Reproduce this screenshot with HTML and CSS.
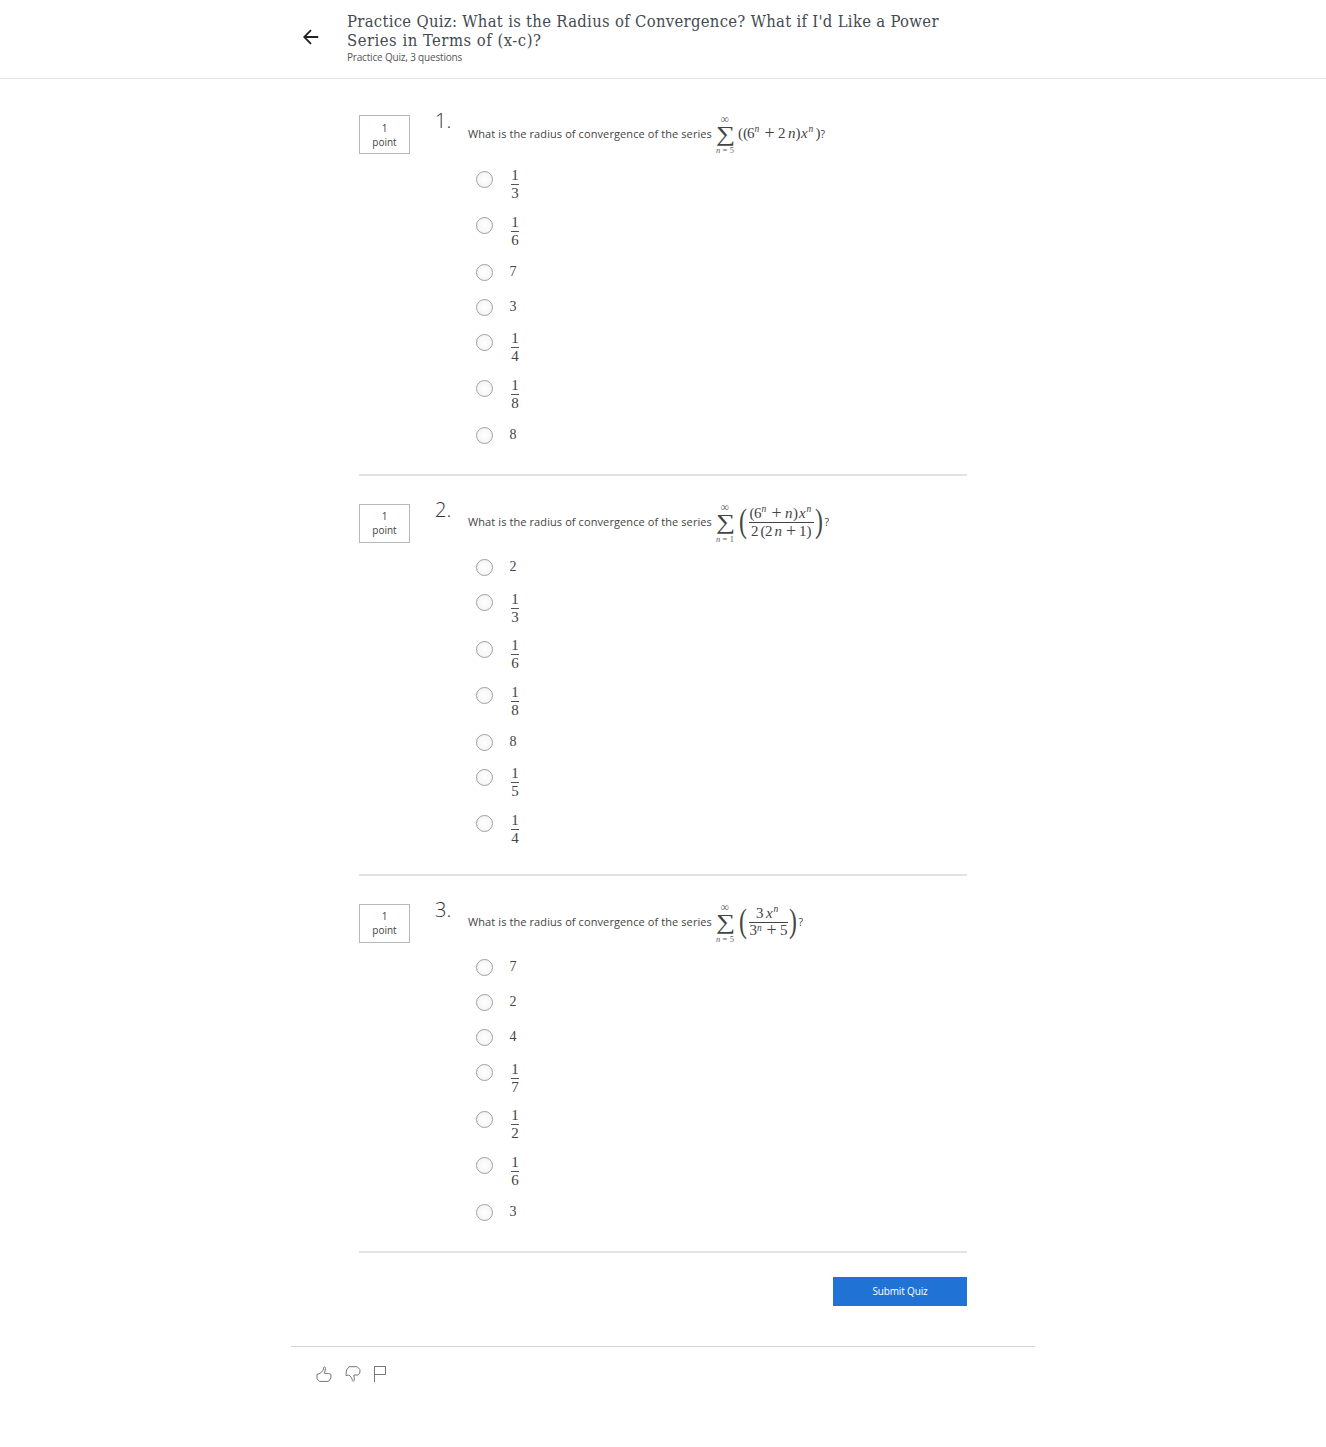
FILE: index.html
```html
<!DOCTYPE html>
<html lang="en">
<head>
<meta charset="utf-8">
<title>Practice Quiz</title>
<link rel="stylesheet" href="styles.css">
</head>
<body>
<header class="header">
  <svg class="back" viewBox="0 0 16 16"><path d="M15.2 8H1.5M8 1.2L1.2 8L8 14.8"/></svg>
  <div class="heading">
    <h1 class="title"><span class="line first">Practice Quiz: What is the Radius of Convergence? What if I'd Like a Power</span> <span class="line second">Series in Terms of (x-c)?</span></h1>
    <p class="subtitle">Practice Quiz, 3 questions</p>
  </div>
</header>
<main class="quiz">
  <section class="question">
    <div class="points">1<br>point</div>
    <div class="number">1.</div>
    <div class="body">
      <div class="prompt"><span class="ask">What is the radius of convergence of the series</span>
        <svg class="formula" width="120" height="48" viewBox="715 110 120 48">
          <text class="sigma" transform="translate(716 140.8) scale(1.28 1)">∑</text>
          <text class="inf" x="720.5" y="122.5">∞</text>
          <text class="small" x="716" y="153" textLength="18"><tspan class="it">n</tspan>=5</text>
          <text x="738" y="138">(</text><text x="743" y="138">(</text><text x="747" y="138">6</text><text class="sup" x="754.5" y="132">n</text>
          <text class="plus" x="764.5" y="139">+</text><text x="778" y="138">2</text><text class="it" x="788" y="138">n</text><text x="795.5" y="138">)</text>
          <text class="it" x="801" y="138">x</text><text class="sup" x="808.5" y="132">n</text><text x="815.5" y="138">)</text>
          <text class="qm" x="820.5" y="137.5">?</text>
        </svg>
      </div>
      <ul class="options">
        <li class="option"><i class="radio"></i><span class="frac"><b>1</b><b>3</b></span></li>
        <li class="option"><i class="radio"></i><span class="frac"><b>1</b><b>6</b></span></li>
        <li class="option"><i class="radio"></i><span class="int">7</span></li>
        <li class="option"><i class="radio"></i><span class="int">3</span></li>
        <li class="option"><i class="radio"></i><span class="frac"><b>1</b><b>4</b></span></li>
        <li class="option"><i class="radio"></i><span class="frac"><b>1</b><b>8</b></span></li>
        <li class="option"><i class="radio"></i><span class="int">8</span></li>
      </ul>
    </div>
  </section>
  <section class="question">
    <div class="points">1<br>point</div>
    <div class="number">2.</div>
    <div class="body">
      <div class="prompt"><span class="ask">What is the radius of convergence of the series</span>
        <svg class="formula" width="120" height="48" viewBox="715 498 120 48">
          <text class="sigma" transform="translate(716 528.8) scale(1.28 1)">∑</text>
          <text class="inf" x="720.5" y="510.5">∞</text>
          <text class="small" x="716" y="542" textLength="18"><tspan class="it">n</tspan>=1</text>
          <text class="big" transform="translate(739 531.8) scale(.72 1)">(</text>
          <text x="749.5" y="518">(</text><text x="754" y="518">6</text><text class="sup" x="761.5" y="512">n</text><text class="plus" x="771.5" y="519">+</text><text class="it" x="785" y="518">n</text><text x="793" y="518">)</text><text class="it" x="799" y="518">x</text><text class="sup" x="806.5" y="512">n</text>
          <path class="bar" d="M749 522.5H814"/>
          <text x="751" y="535.5">2</text><text x="760.5" y="535.5">(</text><text x="765" y="535.5">2</text><text class="it" x="774.5" y="535.5">n</text><text class="plus" x="786" y="536.5">+</text><text x="799" y="535.5">1</text><text x="806.5" y="535.5">)</text>
          <text class="big" transform="translate(815 531.8) scale(.72 1)">)</text>
          <text class="qm" x="824.5" y="525.5">?</text>
        </svg>
      </div>
      <ul class="options">
        <li class="option"><i class="radio"></i><span class="int">2</span></li>
        <li class="option"><i class="radio"></i><span class="frac"><b>1</b><b>3</b></span></li>
        <li class="option"><i class="radio"></i><span class="frac"><b>1</b><b>6</b></span></li>
        <li class="option"><i class="radio"></i><span class="frac"><b>1</b><b>8</b></span></li>
        <li class="option"><i class="radio"></i><span class="int">8</span></li>
        <li class="option"><i class="radio"></i><span class="frac"><b>1</b><b>5</b></span></li>
        <li class="option"><i class="radio"></i><span class="frac"><b>1</b><b>4</b></span></li>
      </ul>
    </div>
  </section>
  <section class="question">
    <div class="points">1<br>point</div>
    <div class="number">3.</div>
    <div class="body">
      <div class="prompt"><span class="ask">What is the radius of convergence of the series</span>
        <svg class="formula" width="120" height="48" viewBox="715 898 120 48">
          <text class="sigma" transform="translate(716 928.8) scale(1.28 1)">∑</text>
          <text class="inf" x="720.5" y="910.5">∞</text>
          <text class="small" x="716" y="942" textLength="18"><tspan class="it">n</tspan>=5</text>
          <text class="big" transform="translate(739 931.8) scale(.72 1)">(</text>
          <text x="756" y="917.5">3</text><text class="it" x="766" y="917.5">x</text><text class="sup" x="773.5" y="912">n</text>
          <path class="bar" d="M749 922.5H788"/>
          <text x="749.5" y="935">3</text><text class="sup" x="757" y="931">n</text><text class="plus" x="766.5" y="936">+</text><text x="780" y="935">5</text>
          <text class="big" transform="translate(789 931.8) scale(.72 1)">)</text>
          <text class="qm" x="798.5" y="925.5">?</text>
        </svg>
      </div>
      <ul class="options">
        <li class="option"><i class="radio"></i><span class="int">7</span></li>
        <li class="option"><i class="radio"></i><span class="int">2</span></li>
        <li class="option"><i class="radio"></i><span class="int">4</span></li>
        <li class="option"><i class="radio"></i><span class="frac"><b>1</b><b>7</b></span></li>
        <li class="option"><i class="radio"></i><span class="frac"><b>1</b><b>2</b></span></li>
        <li class="option"><i class="radio"></i><span class="frac"><b>1</b><b>6</b></span></li>
        <li class="option"><i class="radio"></i><span class="int">3</span></li>
      </ul>
    </div>
  </section>
  <button class="submit">Submit Quiz</button>
</main>
<footer class="feedback">
  <svg class="icon" viewBox="0 0 16 16"><path d="M1 8.4L4 7.4L7.2 4.4L7.6 1.6C8.4.2 9.8 1 9.4 3L8.4 7.4H12.4L14.9 8.4V12L12.6 15.4H3.4L1 12.8Z"/></svg>
  <svg class="icon" viewBox="0 0 16 16"><path d="M1 8.4L1.6 4L4 .7H12.2L14.9 3.4V7L12.8 9H8.8L9.4 13.2C9.6 15.2 8 15.8 7.4 14.6C7 12 5.6 10 3.8 9L1 9.6Z"/></svg>
  <svg class="icon flag" viewBox="0 0 14 16"><path d="M1.5 16V.5H12.5V8.5H1.5"/></svg>
</footer>
</body>
</html>
```
FILE: styles.css
```css
* { box-sizing: border-box; }
body { margin: 0; background: #fff; color: #444; font-family: "Open Sans", sans-serif; }
.header { display: flex; height: 79px; border-bottom: 1px solid #e3e3e3; padding: 12px 0 0 303px; }
.back { width: 16px; height: 16px; margin-top: 17px; fill: none; stroke: #222; stroke-width: 1.8; }
.heading { margin-left: 28px; }
.title { margin: 0; font: 400 16.5px/19px "DejaVu Serif Condensed", "DejaVu Serif", serif; font-stretch: condensed; color: #444b52; }
.line { display: block; width: max-content; }
.first { letter-spacing: .3px; }
.second { letter-spacing: .5px; }
.subtitle { margin: 0; font-size: 10px; line-height: 14px; letter-spacing: -.18px; color: #555; }
.quiz { display: flex; flex-direction: column; width: 608px; margin: 8px 0 0 359px; }
.question { display: flex; align-items: flex-start; padding: 28px 0 21px; border-bottom: 2px solid #e2e2e2; }
.points { width: 51px; height: 39px; border: 1px solid #b8b8b8; padding-top: 4.5px; text-align: center; font-size: 10px; line-height: 14px; }
.number { width: 33px; margin: -8px 0 0 25px; font-size: 20px; font-weight: 300; line-height: 28px; color: #333; }
.body { flex: 1; }
.prompt { display: flex; align-items: center; height: 46.5px; padding-bottom: 9px; }
.ask { width: 247px; font-size: 11px; line-height: 16px; letter-spacing: .095px; white-space: nowrap; }
.formula { flex: none; fill: #444; font: 15px "Liberation Serif", serif; }
.it { font-style: italic; }
.sup { font-size: 9.5px; font-style: italic; }
.small { font-size: 8.5px; fill: #666; }
.inf { font-size: 12px; fill: #666; }
.plus { font-size: 18px; }
.sigma { font-size: 21px; }
.big { font-size: 33px; }
.qm { font: 10.5px "Open Sans", sans-serif; }
.bar { stroke: #444; stroke-width: 1; }
.options { list-style: none; margin: 0; padding: 0; }
.option { display: flex; align-items: flex-start; height: 35px; padding: 9.3px 0 0 8px; }
.option:has(.frac) { height: 46.5px; }
.radio { width: 17px; height: 17px; border: 1px solid #a0a0a0; border-radius: 50%; background: radial-gradient(#fff, #f1f1f1); }
.int { margin-left: 16.5px; font: 14px/16px "Liberation Serif", serif; }
.frac { display: flex; flex-direction: column; width: 8px; margin: -4.5px 0 0 18px; text-align: center; }
.frac b { font: 15px/18px "Liberation Serif", serif; }
.frac b + b { border-top: 1px solid #555; line-height: 17px; }
.submit { align-self: flex-end; width: 134px; height: 29px; margin-top: 24px; padding: 0; border: 0; background: #2073d5; color: #fff; font: 500 10px "Open Sans", sans-serif; letter-spacing: -.15px; }
.feedback { display: flex; gap: 13px; width: 744px; height: 60px; margin: 40px 0 0 291px; padding: 19px 0 0 25px; border-top: 1px solid #d2d2d2; }
.icon { width: 16px; height: 16px; fill: none; stroke: #777; stroke-width: 1; }
.flag { width: 14px; margin-left: -1px; }
```
